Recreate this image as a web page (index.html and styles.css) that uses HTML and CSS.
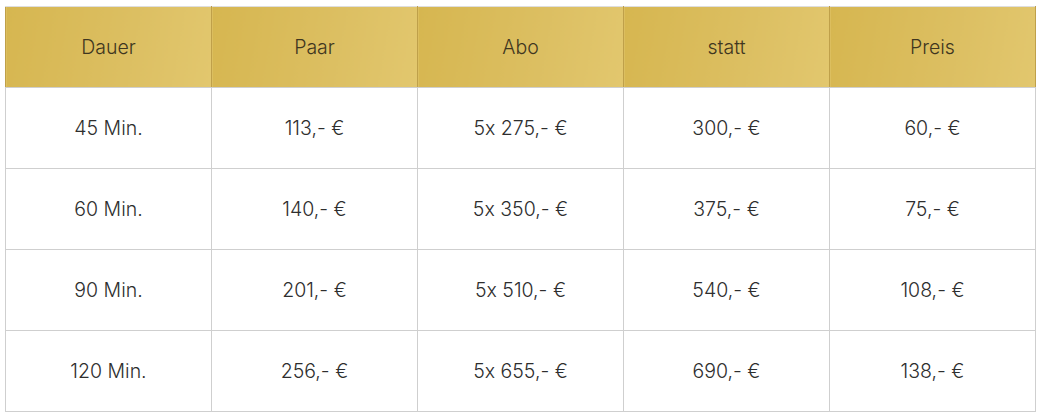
FILE: index.html
```html
<!DOCTYPE html>
<html lang="de">
<head>
<meta charset="utf-8">
<title>Preise</title>
<link rel="stylesheet" href="styles.css">
</head>
<body>
<table class="price-table">
  <thead>
    <tr>
      <th>Dauer</th><th>Paar</th><th>Abo</th><th>statt</th><th>Preis</th>
    </tr>
  </thead>
  <tbody>
    <tr><td>45 Min.</td><td>113,- €</td><td>5x 275,- €</td><td>300,- €</td><td>60,- €</td></tr>
    <tr><td>60 Min.</td><td>140,- €</td><td>5x 350,- €</td><td>375,- €</td><td>75,- €</td></tr>
    <tr><td>90 Min.</td><td>201,- €</td><td>5x 510,- €</td><td>540,- €</td><td>108,- €</td></tr>
    <tr><td>120 Min.</td><td>256,- €</td><td>5x 655,- €</td><td>690,- €</td><td>138,- €</td></tr>
  </tbody>
</table>
</body>
</html>
```
FILE: styles.css
```css
html, body {
  margin: 0;
  padding: 0;
  background: #fff;
}
body {
  padding: 6px 0 0 5px;
  font-family: Inter, "Noto Sans", sans-serif;
  font-feature-settings: "calt" 0;
  color: #2e2e2e;
}
.price-table {
  width: 1031px;
  border-collapse: collapse;
  table-layout: fixed;
}
.price-table th,
.price-table td {
  height: 80px;
  padding: 0;
  line-height: 20px;
  text-align: center;
  vertical-align: middle;
  font-size: 19.5px;
  font-weight: 300;
  border: 1px solid #cfcfcf;
}
.price-table th {
  color: #3f3620;
  background: linear-gradient(100deg, #d6b650 0%, #dcbf62 60%, #e2c76e 100%);
  border-color: #bfa04a;
  border-top-color: #dedede;
  border-bottom-color: #cfcfcf;
}
```
